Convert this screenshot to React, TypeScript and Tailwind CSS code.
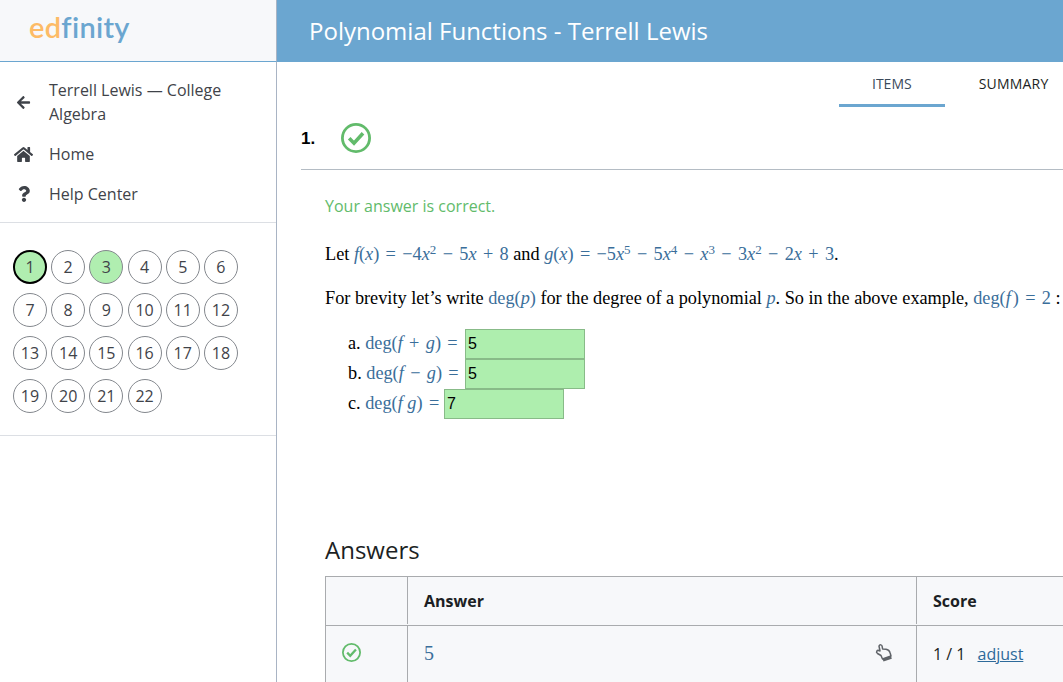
import type { ReactNode } from 'react';
import { FaArrowLeft, FaHome, FaQuestion } from 'react-icons/fa';

const ITEMS = Array.from({ length: 22 }, (_, i) => i + 1);

function CheckCircle({ className }: { className: string }) {
  return (
    <svg viewBox="0 0 30 30" className={className} fill="none">
      <circle cx="15" cy="15" r="13.6" stroke="#62bb6b" strokeWidth="2.8" />
      <path d="M8.2 15.2l4.8 5 9-10" stroke="#62bb6b" strokeWidth="3.6" />
    </svg>
  );
}

function HandIcon() {
  return (
    <svg viewBox="0 0 20 20" className="h-[20px] w-[20px]" fill="none">
      <path
        d="M5 3C5.8 1.2 8 1.6 8.2 3.6L8.6 6L12 6.2C14 6.5 15.5 7.5 16 9.5L17 13L8.5 16L7 12.5L3.5 10.5C1.5 9 3 6.5 5.5 7.8L6 8Z"
        stroke="#606469"
        strokeWidth="1.5"
        strokeLinejoin="round"
      />
      <path d="M8.5 16L17 13L17.8 15.8L9.5 18.6Z" fill="#606469" />
    </svg>
  );
}

function M({ children }: { children: ReactNode }) {
  return <span className="text-[#3a6e9a]">{children}</span>;
}

function V({ children }: { children: ReactNode }) {
  return <i>{children}</i>;
}

function Op({ children }: { children: ReactNode }) {
  return <span className="px-[1.8px]">{children}</span>;
}

function Sup({ children }: { children: ReactNode }) {
  return <sup className="text-[13px] leading-none">{children}</sup>;
}

function NumberCircle({ n }: { n: number }) {
  const correct = n === 1 || n === 3;
  const current = n === 1;
  return (
    <div
      className={`flex h-[34px] w-[34px] items-center justify-center rounded-full text-[16px] text-[#3f4349] ${
        correct ? 'bg-[#b0eeb0]' : 'bg-white'
      } ${current ? 'border-2 border-black' : 'border border-[#84888e]'}`}
    >
      {n}
    </div>
  );
}

function AnswerInput({ value }: { value: string }) {
  return (
    <div className="flex h-[30px] w-[120px] items-center border border-[#88bb88] bg-[#aeeeae] pl-[2px] font-['Liberation_Sans',sans-serif] text-[16px] text-black">
      {value}
    </div>
  );
}

export default function App() {
  return (
    <div className="flex h-[682px] w-[1063px] flex-col overflow-hidden bg-white font-['Open_Sans',sans-serif]">
      {/* Top bar */}
      <div className="flex h-[62px] shrink-0">
        <div className="flex w-[277px] shrink-0 items-center border-r border-b border-r-[#a9b4c4] border-b-[#6ba6d0] bg-[#f7f8fa] pb-[8px] pl-[29px] font-['Lato',sans-serif] text-[29px] font-semibold tracking-[0.3px]">
          <span className="text-[#fdbb66]">ed</span>
          <span className="text-[#6ba6d0]">finity</span>
        </div>
        <div className="flex flex-1 items-center bg-[#6ba6d0] pl-[32px] text-[24px] text-white">
          Polynomial Functions - Terrell Lewis
        </div>
      </div>

      <div className="flex min-h-0 flex-1">
        {/* Sidebar */}
        <div className="w-[277px] shrink-0 border-r border-[#a9b4c4]">
          <div className="border-b border-[#dcdfe4] pt-[16px] pb-[16px] text-[16px] leading-[24px] text-[#3f4349]">
            <div className="flex items-center">
              <div className="flex w-[47px] shrink-0 justify-center pr-[1px]">
                <FaArrowLeft className="text-[15px]" />
              </div>
              <div className="ml-[2px] w-[190px]">Terrell Lewis — College Algebra</div>
            </div>
            <div className="mt-[16px] flex items-center">
              <div className="flex w-[47px] shrink-0 justify-center">
                <FaHome className="text-[19px]" />
              </div>
              <span className="ml-[2px]">Home</span>
            </div>
            <div className="mt-[16px] flex items-center">
              <div className="flex w-[47px] shrink-0 justify-center">
                <FaQuestion className="text-[16px]" />
              </div>
              <span className="ml-[2px]">Help Center</span>
            </div>
          </div>
          <div className="border-b border-[#dcdfe4] px-[13px] pt-[27px] pb-[22px]">
            <div className="grid grid-cols-[repeat(6,34px)] gap-x-[4.2px] gap-y-[9px]">
              {ITEMS.map(n => (
                <NumberCircle key={n} n={n} />
              ))}
            </div>
          </div>
        </div>

        {/* Main */}
        <div className="min-w-0 flex-1 overflow-hidden">
          <div className="w-[830px]">
            {/* Tabs */}
            <div className="flex pl-[562px] text-[14px] leading-[20px]">
              <div className="h-[45px] border-b-[3px] border-[#6ba6d0] px-[33px] pt-[12px] text-[#3a4a5a]">ITEMS</div>
              <div className="h-[45px] px-[34px] pt-[12px] tracking-[0.2px] text-[#1c1f24]">SUMMARY</div>
            </div>

            <div className="ml-[24px]">
              <div className="flex h-[63px] items-center border-b border-[#b4bcc4]">
                <span className="w-[40px] pt-[2px] font-['Liberation_Sans',sans-serif] text-[17px] font-bold text-black">1.</span>
                <CheckCircle className="h-[30px] w-[30px]" />
              </div>

              <div className="pl-[24px]">
                <div className="mt-[24px] text-[16px] leading-[24px] text-[#62bb6b]">Your answer is correct.</div>

                <div className="mt-[24px] whitespace-nowrap font-['Liberation_Serif',serif] text-[18.25px] leading-[24px] text-black">
                  Let <M><V>f</V>(<V>x</V>) <Op>=</Op> −4<V>x</V><Sup>2</Sup> <Op>−</Op> 5<V>x</V> <Op>+</Op> 8</M> and{' '}
                  <M><V>g</V>(<V>x</V>) <Op>=</Op> −5<V>x</V><Sup>5</Sup> <Op>−</Op> 5<V>x</V><Sup>4</Sup> <Op>−</Op> <V>x</V><Sup>3</Sup> <Op>−</Op> 3<V>x</V><Sup>2</Sup> <Op>−</Op> 2<V>x</V> <Op>+</Op> 3</M>.
                </div>

                <div className="mt-[20px] whitespace-nowrap font-['Liberation_Serif',serif] text-[18.25px] leading-[24px] text-black">
                  For brevity let’s write <M>deg(<V>p</V>)</M> for the degree of a polynomial <M><V>p</V></M>. So in the above example,{' '}
                  <M>deg(<i className="pr-[2px]">f</i>) <Op>=</Op> 2</M> :
                </div>

                <div className="mt-[19px] pl-[23px] font-['Liberation_Serif',serif] text-[18.25px] text-black">
                  <div className="flex h-[30px] items-center whitespace-nowrap">
                    <span className="w-[117px]">a. <M>deg(<V>f</V> <Op>+</Op> <V>g</V>) <Op>=</Op></M></span>
                    <AnswerInput value="5" />
                  </div>
                  <div className="flex h-[30px] items-center whitespace-nowrap">
                    <span className="w-[117px]">b. <M>deg(<V>f</V> <Op>−</Op> <V>g</V>) <Op>=</Op></M></span>
                    <AnswerInput value="5" />
                  </div>
                  <div className="flex h-[30px] items-center whitespace-nowrap">
                    <span className="w-[96px]">c. <M>deg(<V>f</V> <V>g</V>) <Op>=</Op></M></span>
                    <AnswerInput value="7" />
                  </div>
                </div>

                <div className="mt-[113px] text-[24px] leading-[36px] text-[#1c1f24]">Answers</div>

                <div className="mt-[8px] border-t border-l border-[#a9abae] bg-[#f7f8fa] text-[16px] text-[#1c1f24]">
                  <div className="flex h-[49px] items-center border-b border-[#a9abae] pb-[1px] font-bold">
                    <div className="h-full w-[82px] shrink-0 border-r border-[#a9abae]" />
                    <div className="flex h-full w-[509px] shrink-0 items-center border-r border-[#a9abae] pl-[16px]">Answer</div>
                    <div className="pl-[16px]">Score</div>
                  </div>
                  <div className="flex h-[60px] items-center">
                    <div className="flex h-full w-[82px] shrink-0 items-center border-r border-[#a9abae] pb-[7px] pl-[16px]">
                      <CheckCircle className="h-[19px] w-[19px]" />
                    </div>
                    <div className="flex h-full w-[509px] shrink-0 items-center justify-between border-r border-[#a9abae] pr-[22px] pb-[6px] pl-[16px]">
                      <span className="font-['Liberation_Serif',serif] text-[20px] text-[#3a6e9a]">5</span>
                      <HandIcon />
                    </div>
                    <div className="flex h-full items-center pb-[4px] pl-[16px]">
                      1 / 1
                      <a className="ml-[12px] text-[#2d6a9a] underline">adjust</a>
                    </div>
                  </div>
                </div>
              </div>
            </div>
          </div>
        </div>
      </div>
    </div>
  );
}
